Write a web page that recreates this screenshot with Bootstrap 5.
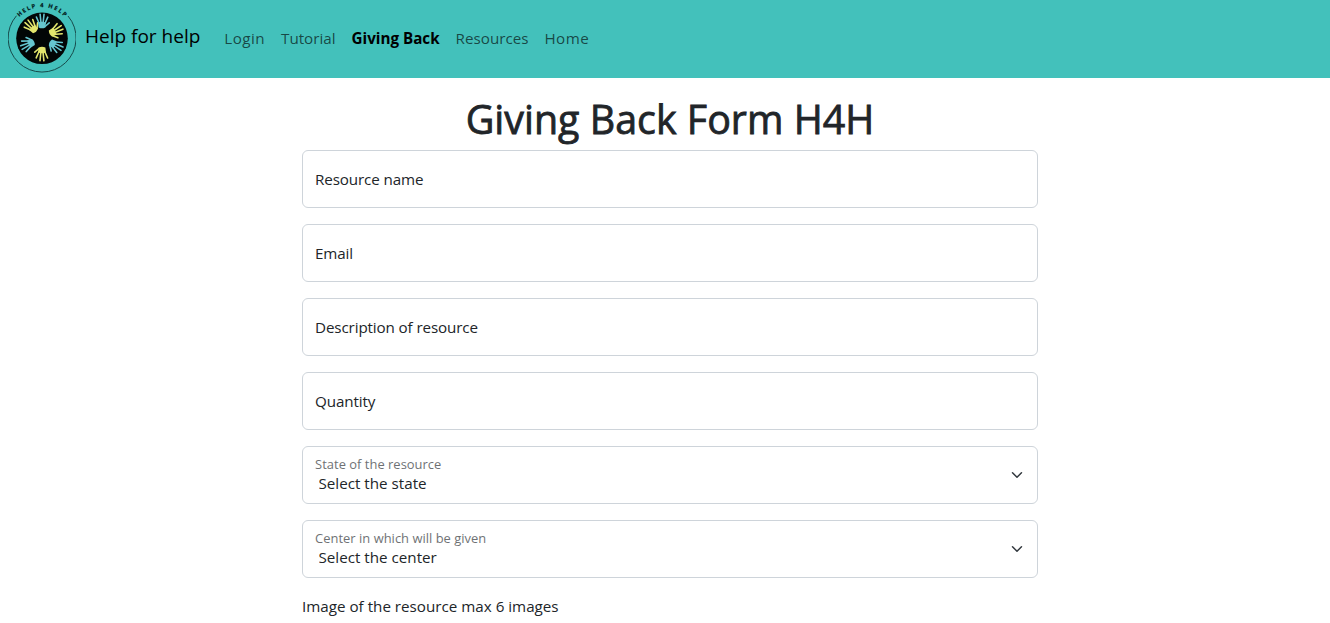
<!DOCTYPE html>
<html lang="en">
<head>
<meta charset="utf-8">
<meta name="viewport" content="width=device-width, initial-scale=1">
<title>Giving Back Form H4H</title>
<link href="https://cdn.jsdelivr.net/npm/bootstrap@5.3.0/dist/css/bootstrap.min.css" rel="stylesheet">
<style>
  body { font-family: "Open Sans", "Noto Sans", sans-serif; font-size: 15.2px; overflow: hidden; height: 100vh; }
  .site-nav { background: #43c1bb; height: 78px; padding: 0 8px; }
  .site-nav .navbar-brand { font-size: 19px; padding: 0; margin-right: 16px; }
  .site-nav .navbar-brand span { margin: -5px 0 0 9px; }
  .site-nav .navbar-nav { margin-top: -2px; }
  .site-nav .nav-link { font-size: 15.2px; line-height: 24px; }
  .site-nav .wide-link { letter-spacing: .45px; }
  .site-nav .active { font-weight: 700; }
  .form-wrap { width: 736px; margin-left: 302px; padding-top: 18px; }
  .form-title { font-size: 39.4px; font-weight: 400; -webkit-text-stroke: .8px currentColor; line-height: 48px; margin-bottom: 6px; position: relative; top: -1px; }
  .form-floating > .form-control, .form-floating > .form-select { font-size: 15.2px; height: 58px; border-color: #ced4da; }
  .form-floating > .form-select { padding-left: 15.5px; line-height: 20px; }
  .form-floating > label { line-height: 24px; }
  .form-floating > .form-control ~ label { letter-spacing: -.12px; }
  .form-floating > .form-select ~ label { letter-spacing: .03px; }
  .images-label { padding-top: 1px; }
</style>
</head>
<body>
<nav class="navbar navbar-expand site-nav">
  <a class="navbar-brand d-flex align-items-center" href="#">
    <svg width="68" height="78" viewBox="8 0 68 78" aria-label="Help 4 Help">
      <defs>
        <path id="arc" d="M11.2 38A30.8 30.8 0 0 1 72.8 38"/>
        <g id="hand">
          <path d="M-4-14.5Q0-15.8 4-14.5L3.4-9.5Q0-7.8-3.4-9.5Z" fill="currentColor"/>
          <path d="M-3-14L-5.6-20M-1.1-15L-1.9-22.8M1.2-15L2-22.6M3.2-14L5.8-19.8M3-10.5L7.2-14.2" stroke="currentColor" stroke-width="1.6" stroke-linecap="round"/>
        </g>
      </defs>
      <path d="M16.5 15.7A34 34 0 1 0 68 16" fill="none" stroke="#174b4b" stroke-width="1"/>
      <circle cx="42" cy="38.3" r="25.8" fill="#020606"/>
      <g transform="translate(42 38)">
        <use href="#hand" transform="rotate(-43)" color="#e3e66d"/>
        <use href="#hand" transform="translate(0 -1)" color="#65c6d0"/>
        <use href="#hand" transform="rotate(62)" color="#e3e66d"/>
        <use href="#hand" transform="rotate(118)" color="#65c6d0"/>
        <use href="#hand" transform="rotate(180)" color="#e3e66d"/>
        <use href="#hand" transform="rotate(245)" color="#65c6d0"/>
      </g>
      <text font-family="Open Sans, sans-serif" font-size="6" font-weight="800" letter-spacing="1.35" fill="#072b2b" text-anchor="middle"><textPath href="#arc" startOffset="50.5%">HELP 4 HELP</textPath></text>
    </svg>
    <span>Help for help</span>
  </a>
  <div class="navbar-nav">
    <a class="nav-link wide-link" href="#">Login</a>
    <a class="nav-link" href="#">Tutorial</a>
    <a class="nav-link active" href="#">Giving Back</a>
    <a class="nav-link" href="#">Resources</a>
    <a class="nav-link wide-link" href="#">Home</a>
  </div>
</nav>
<main class="form-wrap">
  <h1 class="form-title text-center">Giving Back Form H4H</h1>
  <form>
    <div class="form-floating mb-3"><input class="form-control" id="name" placeholder=" "><label for="name">Resource name</label></div>
    <div class="form-floating mb-3"><input class="form-control" id="email" placeholder=" "><label for="email">Email</label></div>
    <div class="form-floating mb-3"><input class="form-control" id="desc" placeholder=" "><label for="desc">Description of resource</label></div>
    <div class="form-floating mb-3"><input class="form-control" id="qty" placeholder=" "><label for="qty">Quantity</label></div>
    <div class="form-floating mb-3"><select class="form-select" id="state"><option>Select the state</option></select><label for="state">State of the resource</label></div>
    <div class="form-floating mb-3"><select class="form-select" id="center"><option>Select the center</option></select><label for="center">Center in which will be given</label></div>
    <div class="images-label">Image of the resource max 6 images</div>
  </form>
</main>
<script src="https://cdn.jsdelivr.net/npm/bootstrap@5.3.0/dist/js/bootstrap.bundle.min.js"></script>
</body>
</html>
